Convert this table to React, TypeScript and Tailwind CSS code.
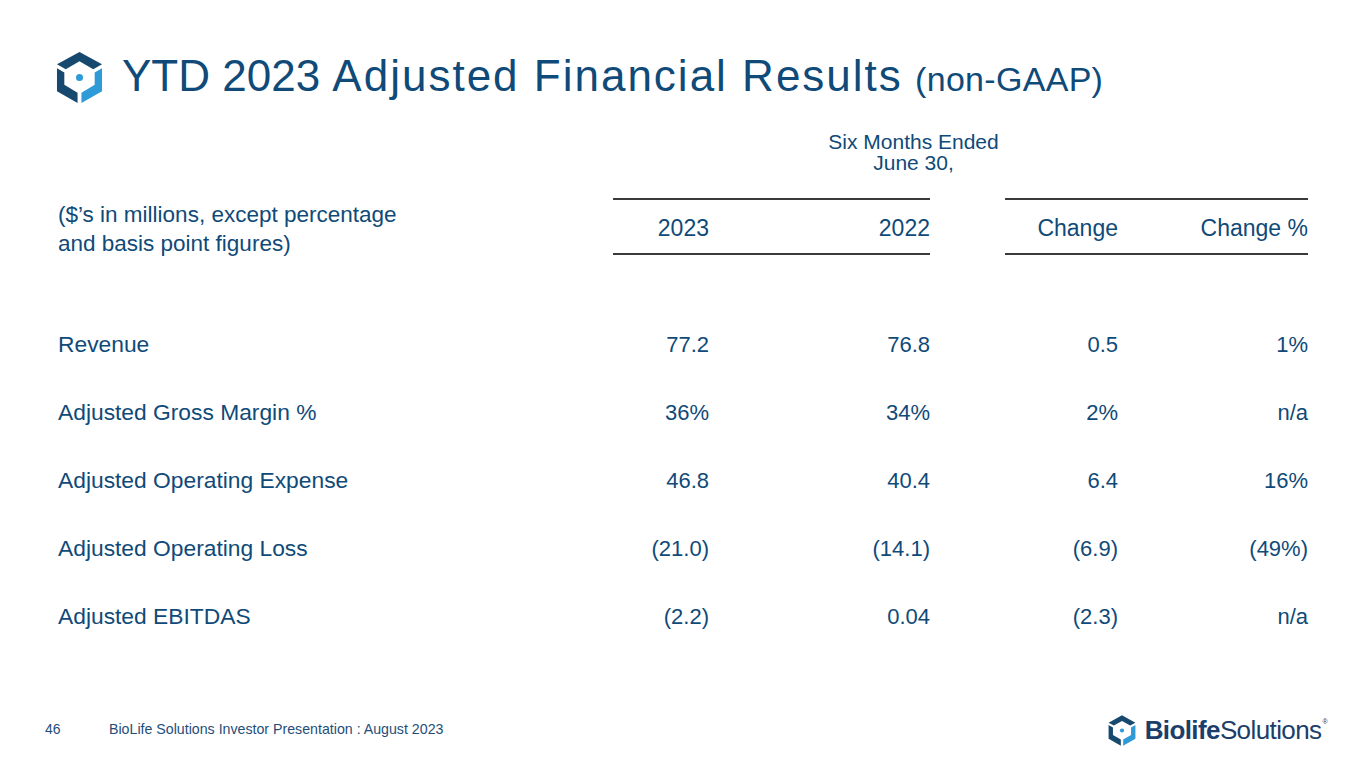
const TEXT = "text-[#0f4a78]";

const rows = [
  { label: "Revenue", a: "77.2", b: "76.8", c: "0.5", d: "1%" },
  { label: "Adjusted Gross Margin %", a: "36%", b: "34%", c: "2%", d: "n/a" },
  { label: "Adjusted Operating Expense", a: "46.8", b: "40.4", c: "6.4", d: "16%" },
  { label: "Adjusted Operating Loss", a: "(21.0)", b: "(14.1)", c: "(6.9)", d: "(49%)" },
  { label: "Adjusted EBITDAS", a: "(2.2)", b: "0.04", c: "(2.3)", d: "n/a" },
];

function CubeLogo({ className }: { className?: string }) {
  return (
    <svg viewBox="0 0 48 52" className={className}>
      {/* top chevron */}
      <polygon points="1,12.5 24,0 47,12.5 38,17.5 24,9.5 10,17.5" fill="#17496f" />
      {/* left side */}
      <polygon points="1,16.5 8.5,21 8.5,33.5 22,41.5 22,52 1,40" fill="#17496f" />
      {/* right side */}
      <polygon points="47,16.5 47,40 26,52 26,41.5 39.5,33.5 39.5,21" fill="#2e9ad8" />
      <circle cx="24" cy="26" r="3.6" fill="#2e9ad8" />
    </svg>
  );
}

export default function App() {
  return (
    <div
      className="w-[1365px] h-[768px] bg-white flex flex-col relative overflow-hidden"
      style={{ fontFamily: '"Liberation Sans", Arial, sans-serif' }}
    >
      {/* Title */}
      <div className="flex items-center pl-[56px] pt-[50px]">
        <CubeLogo className="w-[47px] h-[51px]" />
        <h1 className={`ml-[19px] text-[44px] leading-[51px] whitespace-nowrap ${TEXT}`}>
          YTD 2023{" "}
          <span className="tracking-[2px]">Adjusted Financial Results</span>{" "}
          <span className="text-[34px] tracking-[0.3px]">(non-GAAP)</span>
        </h1>
      </div>

      {/* Table */}
      <div className={`ml-[58px] mt-[26px] w-[1250px] ${TEXT}`}>
        <div className="grid grid-cols-[555px_96px_221px_75px_113px_190px]">
          <div className="col-start-3 col-span-3 text-center text-[21px] leading-[21px]">
            Six Months Ended
            <br />
            June 30,
          </div>
        </div>

        <div className="grid grid-cols-[555px_96px_221px_75px_113px_190px] grid-rows-[57px] mt-[25px]">
          <div className="h-[57px] flex items-center pt-[5px] text-[22.5px] leading-[29px] whitespace-nowrap">
            <div>
              ($’s in millions, except percentage
              <br />
              and basis point figures)
            </div>
          </div>
          <div className="col-span-2 grid grid-cols-[96px_221px] items-center pt-[4px] border-y-2 border-[#3a3a3a] text-[23px]">
            <div className="text-right">2023</div>
            <div className="text-right">2022</div>
          </div>
          <div />
          <div className="col-span-2 grid grid-cols-[113px_190px] items-center pt-[4px] border-y-2 border-[#3a3a3a] text-[23px]">
            <div className="text-right">Change</div>
            <div className="text-right">Change %</div>
          </div>
        </div>

        <div className="mt-[55px] flex flex-col">
          {rows.map((r) => (
            <div
              key={r.label}
              className="grid grid-cols-[555px_96px_221px_75px_113px_190px] h-[68px] items-center text-[22px]"
            >
              <div className="text-[22.8px]">{r.label}</div>
              <div className="text-right">{r.a}</div>
              <div className="text-right">{r.b}</div>
              <div />
              <div className="text-right">{r.c}</div>
              <div className="text-right">{r.d}</div>
            </div>
          ))}
        </div>
      </div>

      {/* Footer */}
      <div className="mt-auto mb-[13px] flex items-center h-[36px]">
        <div className="ml-[45px] w-[64px] text-[14px] text-[#1f4e79] self-start">46</div>
        <div className="text-[14.2px] text-[#1f4e79] self-start">
          BioLife Solutions Investor Presentation : August 2023
        </div>
        <div className="ml-auto mr-[38px] mb-[14px] flex items-center">
          <CubeLogo className="w-[28px] h-[31px]" />
          <div className="ml-[9px] text-[26px] leading-none text-[#1b3e6a] tracking-[-0.6px] flex items-start">
            <span className="font-bold">Biolife</span>
            <span>Solutions</span>
            <span className="text-[7px] ml-[1px] mt-[1px]">®</span>
          </div>
        </div>
      </div>
    </div>
  );
}
